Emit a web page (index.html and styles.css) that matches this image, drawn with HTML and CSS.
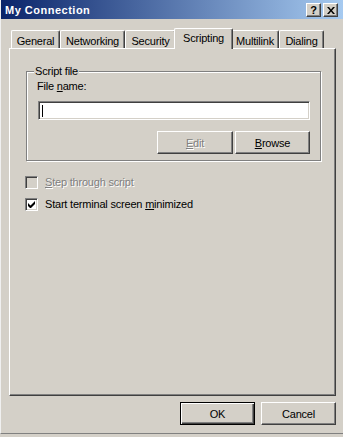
FILE: index.html
```html
<!DOCTYPE html>
<html lang="en">
<head>
    <meta charset="UTF-8">
    <title>My Connection</title>
    <link rel="stylesheet" href="styles.css">
</head>
<body>
    <div class="window">
        <div class="titlebar">
            <span class="title">My Connection</span>
            <div class="title-btns">
                <span class="tbtn">?</span>
                <span class="tbtn">
                    <svg width="8" height="7" viewBox="0 0 8 7"><path d="M0 0h2l2 2.5L6 0h2L5 3.5 8 7H6L4 4.5 2 7H0l3-3.5z" fill="#000"/></svg>
                </span>
            </div>
        </div>

        <!-- вкладки -->
        <div class="tabs">
            <div class="tab w-general">General</div>
            <div class="tab w-net">Networking</div>
            <div class="tab w-sec">Security</div>
            <div class="tab active">Scripting</div>
            <div class="tab w-multi">Multilink</div>
            <div class="tab w-dial">Dialing</div>
        </div>

        <div class="panel">
            <div class="group">
                <span class="legend">Script file</span>
                <div class="label">File <u>n</u>ame:</div>
                <div class="textbox"><span class="caret"></span></div>
                <div class="btn-row">
                    <span class="btn disabled"><u>E</u>dit</span>
                    <span class="btn btn-browse"><u>B</u>rowse</span>
                </div>
            </div>

            <div class="check first disabled">
                <span class="box"></span>
                <span><u>S</u>tep through script</span>
            </div>
            <div class="check">
                <span class="box checked">
                    <svg width="7" height="7" viewBox="0 0 7 7"><path d="M0 2v3l2 2h1l4-4V0L2.5 4.5z" fill="#000"/></svg>
                </span>
                <span>Start terminal screen <u>m</u>inimized</span>
            </div>
        </div>

        <div class="footer">
            <span class="btn default">OK</span>
            <span class="btn btn-browse">Cancel</span>
        </div>
    </div>
</body>
</html>
```

FILE: styles.css
```css
body { margin: 0; font-family: "Liberation Sans", Arial, sans-serif; font-size: 11px; letter-spacing: -0.2px; color: #000; background: #d4d0c8; }
u { text-decoration: underline; text-underline-offset: 1px; }

.window { width: 343px; height: 434px; box-sizing: border-box; border-left: 1px solid #f0f0f0; border-bottom: 1px solid #808080; background: #d4d0c8; }

.titlebar { height: 19px; display: flex; align-items: center; justify-content: space-between; padding: 1px 5px 0 4px; box-sizing: border-box; background: linear-gradient(to right, #0a246a, #a6caf0); }
.title { color: #fff; font-weight: bold; font-size: 11px; letter-spacing: 0.5px; }
.title-btns { display: flex; gap: 2px; }
.tbtn { width: 15px; height: 14px; box-sizing: border-box; display: flex; align-items: center; justify-content: center; background: #d4d0c8; border: 1px solid; border-color: #fff #404040 #404040 #fff; box-shadow: inset -1px -1px #808080; font-weight: bold; font-size: 11px; line-height: 12px; letter-spacing: 0; }

.tabs { display: flex; align-items: flex-end; height: 20px; margin-top: 9px; padding-left: 10px; }
.tab { height: 18px; box-sizing: border-box; border: 1px solid; border-color: #fff #404040 transparent #fff; border-bottom: 0; box-shadow: inset -1px 0 #808080; border-radius: 2px 2px 0 0; text-align: center; line-height: 16px; padding-top: 2px; }
.w-general { width: 49px; }
.w-net { width: 65px; }
.w-sec { width: 51px; }
.w-multi { width: 48px; }
.w-dial { width: 45px; }
.tab.active { width: 59px; height: 21px; margin: 0 -2px -1px; padding-top: 1px; position: relative; z-index: 1; background: #d4d0c8; }

.panel { margin-left: 8px; width: 327px; height: 348px; box-sizing: border-box; border: 1px solid; border-color: #fff #404040 #404040 #fff; box-shadow: inset -1px -1px #808080; }

.group { position: relative; margin: 22px 0 0 16px; width: 295px; height: 90px; box-sizing: border-box; border: 1px solid #808080; box-shadow: 1px 1px 0 #fff, inset 1px 1px 0 #fff; padding: 8px 0 0 10px; }
.legend { position: absolute; top: -7px; left: 7px; padding: 0 1px; background: #d4d0c8; line-height: 13px; }
.label { line-height: 13px; }
.textbox { margin: 8px 0 0 1px; width: 272px; height: 19px; box-sizing: border-box; background: #fff; border: 1px solid; border-color: #808080 #fff #fff #808080; box-shadow: inset 1px 1px #404040, inset -1px -1px #d4d0c8; padding: 3px 0 0 3px; }
.caret { display: block; width: 1px; height: 12px; background: #000; }
.btn-row { width: 272px; margin: 11px 0 0 1px; display: flex; justify-content: flex-end; gap: 2px; }

.btn { width: 76px; height: 23px; box-sizing: border-box; display: flex; align-items: center; justify-content: center; border: 1px solid; border-color: #fff #404040 #404040 #fff; box-shadow: inset -1px -1px #808080; }
.btn-browse { width: 75px; }
.btn.disabled { color: #808080; text-shadow: 1px 1px 0 #fff; }
.btn.default { width: 75px; border: 1px solid #000; box-shadow: inset 1px 1px #fff, inset -1px -1px #404040, inset -2px -2px #808080; }

.check { display: flex; align-items: center; gap: 7px; margin-left: 15px; line-height: 13px; }
.check.first { margin-top: 15px; }
.check + .check { margin-top: 9px; }
.check.disabled { color: #808080; text-shadow: 1px 1px 0 #fff; }
.box { width: 13px; height: 13px; box-sizing: border-box; display: flex; align-items: center; justify-content: center; background: #fff; border: 1px solid; border-color: #808080 #fff #fff #808080; box-shadow: inset 1px 1px #404040, inset -1px -1px #d4d0c8; }
.check.disabled .box { background: #d4d0c8; }

.footer { display: flex; justify-content: flex-end; gap: 6px; margin-top: 6px; padding-right: 7px; }
```
